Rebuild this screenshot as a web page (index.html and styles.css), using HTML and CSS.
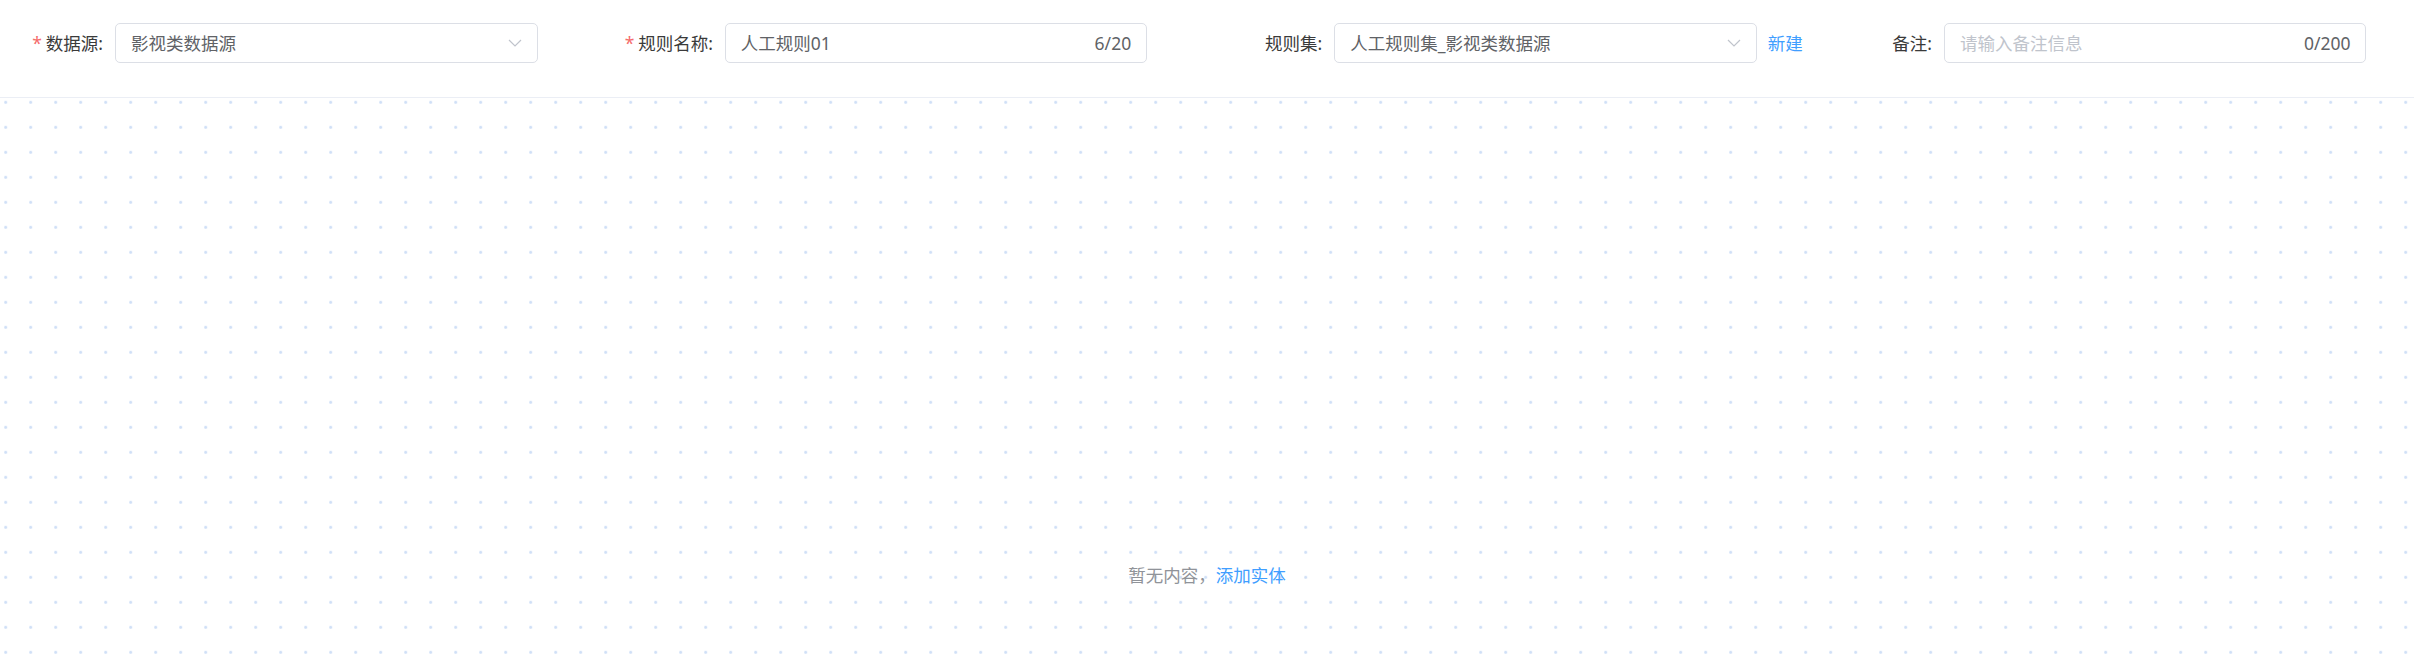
FILE: index.html
```html
<!DOCTYPE html>
<html lang="zh-CN">
<head>
<meta charset="utf-8">
<title>规则编辑</title>
<link rel="stylesheet" href="styles.css">
</head>
<body>
<div class="page">
  <header class="toolbar">
    <div class="field">
      <label class="label required">数据源:</label>
      <div class="control select">
        <span class="value">影视类数据源</span>
        <svg class="arrow" width="14" height="8" viewBox="0 0 14 8"><polyline points="1,1 7,7 13,1" fill="none" stroke="#c0c4cc" stroke-width="1.2"/></svg>
      </div>
    </div>
    <div class="field">
      <label class="label required">规则名称:</label>
      <div class="control">
        <span class="value">人工规则01</span>
        <span class="count">6/20</span>
      </div>
    </div>
    <div class="field">
      <label class="label">规则集:</label>
      <div class="control select">
        <span class="value">人工规则集_影视类数据源</span>
        <svg class="arrow" width="14" height="8" viewBox="0 0 14 8"><polyline points="1,1 7,7 13,1" fill="none" stroke="#c0c4cc" stroke-width="1.2"/></svg>
      </div>
      <a class="link new-link" href="#">新建</a>
    </div>
    <div class="field">
      <label class="label">备注:</label>
      <div class="control">
        <span class="value placeholder">请输入备注信息</span>
        <span class="count">0/200</span>
      </div>
    </div>
  </header>
  <main class="canvas">
    <div class="empty">暂无内容，<a class="link" href="#">添加实体</a></div>
  </main>
</div>
</body>
</html>
```

FILE: styles.css
```css
html, body {
  margin: 0;
  padding: 0;
  height: 660px;
  overflow: hidden;
  background: #fff;
}

.page {
  font-family: "Noto Sans", "Noto Sans CJK SC", sans-serif;
  font-size: 17.5px;
  color: #606266;
  height: 660px;
  display: flex;
  flex-direction: column;
}

.toolbar {
  display: grid;
  grid-template-columns: 609.67px 609.67px 609.67px 1fr;
  padding: 23px 0 34px 15px;
  border-bottom: 1px solid #ebeef5;
}

.field {
  display: flex;
  align-items: center;
  height: 40px;
}

.label {
  width: 100px;
  box-sizing: border-box;
  padding-right: 12px;
  text-align: right;
  color: #3a3a3a;
  line-height: 40px;
  white-space: nowrap;
}

.label.required::before {
  content: "*";
  color: #f56c6c;
  margin-right: 4px;
}

.control {
  width: 422.5px;
  height: 40px;
  box-sizing: border-box;
  border: 1px solid #dcdfe6;
  border-radius: 5px;
  padding: 0 15px;
  display: flex;
  align-items: center;
  justify-content: space-between;
  background: #fff;
}

.value {
  color: #606266;
  line-height: 24px;
  white-space: nowrap;
}

.value.placeholder {
  color: #c0c4cc;
}

.count {
  color: #606266;
  line-height: 24px;
}

.arrow {
  display: block;
  margin-right: 0;
}

.link {
  color: #409eff;
  text-decoration: none;
}

.new-link {
  margin-left: 11px;
  line-height: 24px;
}

.canvas {
  flex: 1;
  background-color: #fff;
  background-image: radial-gradient(circle at center, #cfdff7 0, #cfdff7 1.1px, rgba(207,223,247,0) 1.8px);
  background-size: 25px 25px;
  background-position: -6.8px -8.2px;
}

.empty {
  padding-top: 465px;
  text-align: center;
  line-height: 24px;
  color: #909399;
}
```
